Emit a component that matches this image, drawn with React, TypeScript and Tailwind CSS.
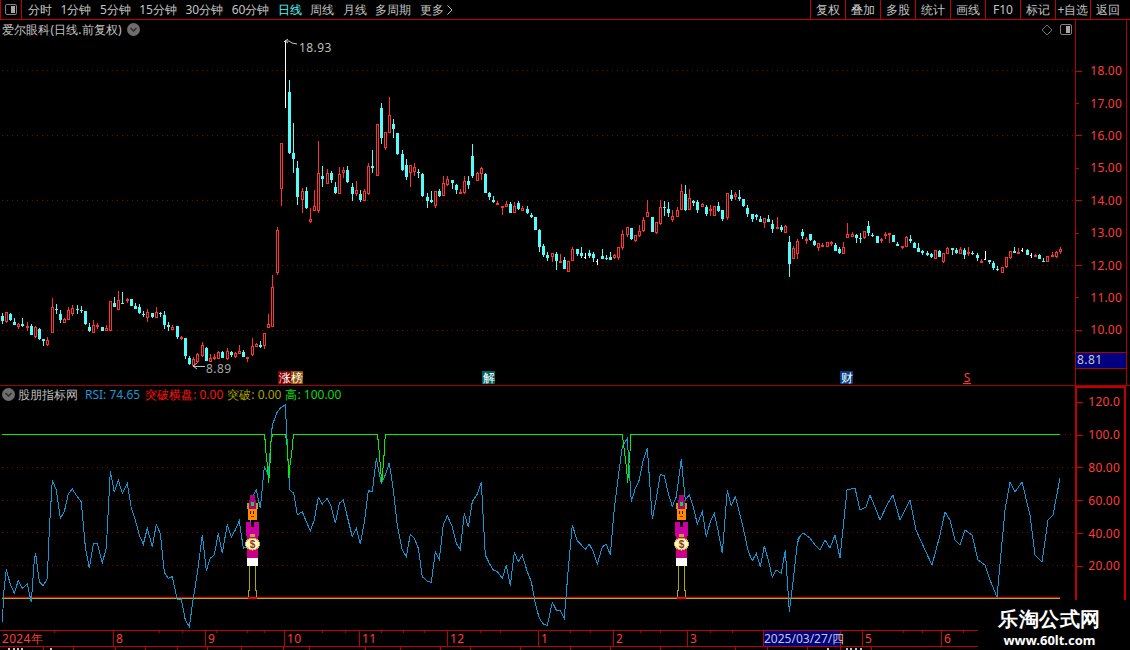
import React from "react";

const SEG: { x0: number; y0: number; d: string }[] = [
  { x0: 0, y0: 100, d: "c7,640,648,664,672 r19,635,637,667,670 c31,640,643,660,662 c43,655,665,675,675 r55,670,671,681,688 c67,655,672,679,682 r82,667,678,683,692 c94,672,678,705,705 r106,678,680,711,713 c118,685,687,717,719 c130,717,717,723,738 r142,712,721,735,738 r157,595,622,698,698 c169,612,627,631,642 c181,630,642,660,668 r193,655,656,668,668 r205,622,630,660,660 r217,616,624,641,648 c232,615,627,630,642 c244,618,630,632,640 c256,633,633,672,674 c268,670,681,692,695 r280,660,676,698,698 r292,670,675,681,686 c307,681,681,692,692 r319,675,683,692,692 r331,603,604,692,692 c343,590,610,620,622 r355,573,600,629,629 c367,576,608,610,610 r382,594,598,604,610 c394,597,597,617,619 c406,609,618,626,628 c418,613,622,638,641 c430,633,643,646,652 r442,628,637,653,666 c457,640,640,650,654 r469,622,637,653,653 c481,635,638,641,652 c493,633,645,675,687 c505,666,675,681,692 r517,675,681,690,690 c532,677,677,711,717 r544,708,711,717,719 c556,714,714,767,777 c568,768,773,792,796 r580,770,778,797,797 r592,758,763,786,788 r607,727,736,767,772 c619,741,744,783,784 r631,762,775,785,787 r643,762,770,778,781 r655,752,756,776,778 c667,753,756,774,774 r682,745,754,776,780 c694,752,756,765,770 r706,756,760,770,773 r718,736,754,761,761 c730,750,756,771,771 r742,771,771,772,786 r757,714,739,765,767 r769,728,733,742,742 c781,724,735,742,744 r793,699,700,738,746 r805,642,673,683,683 r817,526,562,680,680 r832,381,390,520,525 r844,130,130,268,318 w856,-180,-178,-176,24 c868,-60,-24,159,161 c880,69,159,177,219 c892,183,205,290,315 r907,265,273,300,338 c919,262,273,325,327 r931,324,358,366,369 r943,270,319,332,332 r955,124,220,332,338 c967,198,229,236,260 r982,208,220,251,251 c994,213,220,240,250 c1006,245,262,280,282 r1018,202,222,281,281 r1030,202,210,218,233 c1042,198,210,247,249" },
  { x0: 350, y0: 90, d: "c7,280,292,312,332 r19,274,301,312,317 c31,300,312,331,335 r43,298,304,332,332 r55,220,229,312,315 c67,180,228,234,249 r82,103,103,257,257 c94,40,54,144,162 r106,127,127,174,179 r118,22,76,128,128 c130,87,102,117,144 c142,129,129,192,195 c157,180,192,240,243 c169,207,225,261,270 r181,225,226,250,291 r193,220,232,246,258 c205,238,245,249,264 c217,250,252,319,321 c232,309,321,333,354 c244,303,330,337,339 r256,304,304,347,354 c268,297,304,318,321 r280,258,279,317,317 r292,258,267,285,288 c307,270,270,279,297 c319,282,286,300,312 r331,297,306,311,311 r343,258,274,309,312 c355,258,273,285,297 c367,162,198,258,264 r382,247,250,272,272 r394,232,234,251,270 c406,249,252,309,309 c418,306,309,321,330 c430,318,330,336,339 r442,333,339,345,346 r457,348,349,352,375 r469,333,343,350,351 c481,336,343,369,369 r493,336,348,369,369 c505,333,339,358,361 r517,349,354,362,362 c532,348,357,369,372 c544,369,375,382,385 c556,380,381,420,420 c568,417,420,470,486 c580,462,468,495,500 c592,486,495,504,513 r607,489,490,500,516 c619,486,492,513,540 r631,492,513,519,519 c643,501,510,537,537 r655,513,513,545,545 r667,471,477,513,513 c682,477,477,492,498 c694,471,489,498,504 w706,489,501,504,507 c718,480,489,498,504 c730,486,492,504,516 w742,507,513,516,525 c757,477,498,507,507 c769,495,504,507,510 c781,486,501,510,510 r793,492,495,504,507 r805,472,472,504,510 r817,420,432,474,480 r832,411,412,435,441 c844,414,414,447,450 r856,435,436,453,456 r868,405,423,438,441 r880,381,390,423,426 r892,330,366,381,381 c907,381,381,426,426 r919,396,397,429,432 r931,330,351,402,405 c943,333,351,354,378 c955,336,357,369,381 r967,360,378,390,396 r982,350,360,381,381 r994,282,303,360,360 c1006,285,312,360,363 r1018,297,324,360,360 c1030,330,333,339,348 c1042,330,336,360,369" },
  { x0: 700, y0: 170, d: "r7,98,102,111,111 c19,105,111,132,138 r31,105,117,123,138 r43,108,108,138,138 c55,96,108,123,126 c67,120,120,147,153 r82,69,69,144,150 c94,60,75,87,93 r106,66,72,81,90 c118,60,81,87,93 c130,87,87,108,111 c142,105,114,132,141 c157,132,132,147,156 c169,132,135,141,150 c181,138,147,156,156 r193,144,144,159,174 c205,135,147,156,156 c217,150,162,177,189 r232,141,172,174,174 c244,165,171,180,186 r256,165,168,189,189 c268,198,216,282,321 r280,228,234,267,267 r292,207,213,252,267 c307,177,186,198,207 r319,201,207,208,222 c331,192,192,210,213 c343,210,213,225,228 r355,220,220,234,243 r367,219,225,231,231 r382,216,217,231,231 r394,213,216,222,228 c406,219,225,243,243 c418,231,237,249,252 r430,216,231,251,251 r442,159,192,204,204 r457,186,192,201,201 c469,192,195,204,219 c481,189,204,207,219 r493,183,184,204,207 c505,153,168,189,198 c517,189,195,198,201 c532,198,198,219,219 r544,204,207,213,219 r556,186,192,199,207 r568,189,190,191,219 c580,195,195,216,216 c592,216,222,228,228 r607,228,228,230,237 r619,198,201,231,231 c631,195,207,213,219 c643,216,219,234,234 c655,219,234,246,246 c667,240,243,249,255 c682,243,249,255,258 c694,249,252,261,264 r706,240,240,267,267 c718,240,243,261,261 r730,249,249,276,279 r742,231,234,252,252 c757,234,234,240,255 c769,234,240,249,252 r781,231,237,252,252 c793,234,240,255,267 r805,231,246,252,258 c817,243,248,250,255 c832,249,255,264,273 r844,267,273,275,276 w856,243,267,270,270 c868,270,270,276,282 c880,273,279,294,300 c892,288,297,300,303 r907,291,291,309,309 r919,261,261,291,294 r931,243,243,264,267 c943,231,243,249,249 r955,234,246,252,252 w967,234,240,243,246 c982,237,240,255,255 w994,249,255,258,264 r1006,252,254,258,258 c1018,252,255,267,267 c1030,264,273,276,276 r1042,258,258,276,276 r1057,246,255,261,261 r1069,243,246,261,264 r1081,231,237,246,252" },
];

const RSI_A = "7,665 12,570 19,507 30,550 43,580 55,541 67,565 82,552 94,607 103,480 107,460 118,545 130,557 142,535 148,390 157,240 169,270 181,355 193,335 205,282 217,267 232,290 244,305 256,440 268,505 280,432 292,430 307,488 319,445 331,213 343,277 355,240 367,280 382,250 394,325 406,360 418,405 430,433 442,385 457,440 469,373 481,400 493,517 505,535 517,530 532,600 544,597 556,660 568,680 580,595 592,520 607,405 619,512 631,475 643,465 655,400 667,460 682,373 694,412 706,390 718,362 730,445 745,440 757,290 769,270 781,325 793,200 805,225 817,75 832,35 844,22 856,15 865,195 870,270 881,280 892,345 907,335 919,365 931,392 943,360 955,292 967,312 982,295 994,320 1006,370 1018,310 1030,300 1042,350 1057,410 1069,385 1081,433 1093,367 1105,272 1117,275 1129,175 1144,250 1156,225 1168,188 1180,270 1192,375 1200,417";
const RSI_B = "7,450 19,470 31,403 43,415 55,445 67,530 82,543 94,548 106,455 118,478 130,375 142,347 157,380 169,430 181,448 193,340 205,382 217,305 232,282 244,247 256,465 268,490 280,510 292,515 307,535 319,495 331,557 343,457 355,485 367,466 382,515 394,545 406,610 418,655 430,672 442,677 457,607 469,630 481,632 493,655 505,505 517,375 532,423 544,435 556,448 568,433 580,455 592,493 607,440 619,433 631,465 643,325 655,230 667,140 682,115 694,305 706,265 718,240 730,180 742,145 757,358 769,295 781,223 793,227 805,280 817,320 829,290 844,178 856,300 868,285 880,320 892,372 907,335 919,410 931,365 943,340 955,395 967,460 982,270 994,317 1006,290 1018,335 1030,385 1045,455 1057,482 1069,460 1081,500 1093,438 1105,480 1117,532 1129,510 1144,520 1156,450 1162,540 1168,635 1180,540 1192,430 1200,410";
const RSI_C = "797,540 803,533 810,538 815,545 820,550 825,540 830,548 835,535 840,558 847,490 855,488 860,510 866,507 870,495 875,507 880,520 887,505 893,495 900,520 905,510 910,500 916,530 925,550 932,565 940,535 945,512 950,520 955,540 960,545 965,530 972,535 978,560 985,565 990,580 997,597 1005,510 1010,482 1015,492 1022,482 1030,515 1035,555 1042,562 1048,520 1053,515 1060,478";

const map = (s: string, x0: number) =>
  s.split(" ").map((p) => {
    const [x, y] = p.split(",").map(Number);
    return `${(x0 + x / 3).toFixed(1)},${(400 + y / 3).toFixed(1)}`;
  }).join(" ");
const RSI = [map(RSI_A, 0), map(RSI_B, 400), RSI_C].join(" ");

const dip = (pts: number[][], x0: number) => pts.map(([x, y]) => `${(x0 + x / 3).toFixed(1)},${(400 + y / 3).toFixed(1)}`).join(" ");
const GREEN = [
  "2,434.5",
  dip([[793,103],[796,125],[798,158],[802,195],[806,250],[810,190],[813,125],[818,103],[856,103],[860,125],[863,160],[866,235],[870,195],[875,160],[878,125],[881,103],[1132,103],[1135,125],[1138,160],[1141,195],[1145,250],[1150,195],[1153,155],[1156,103]], 0),
  dip([[667,103],[670,125],[673,150],[676,175],[680,210],[683,250],[687,190],[690,155],[693,103]], 400),
  "1060,434.5",
].join(" ");

function Candles() {
  const out: React.ReactElement[] = [];
  SEG.forEach((s, si) => {
    s.d.split(" ").forEach((tok, i) => {
      const t = tok[0];
      const [xz, hi, top, bot, lo] = tok.slice(1).split(",").map(Number);
      const cx = Math.floor(s.x0 + xz / 3);
      const Y = (v: number) => Math.round(s.y0 + v / 3);
      const col = t === "c" ? "#54fcfc" : t === "r" ? "#ff3232" : "#ffffff";
      const yh = Y(hi), yt = Y(top), yb = Y(bot), yl = Y(lo);
      out.push(
        <g key={`${si}-${i}`}>
          {yt > yh && <rect x={cx} y={yh} width={1} height={yt - yh} fill={col} />}
          {yl > yb && <rect x={cx} y={yb} width={1} height={yl - yb} fill={col} />}
          {t === "r" ? (
            <rect x={cx - 0.5} y={yt + 0.5} width={2} height={Math.max(yb - yt - 1, 1)} fill="#000" stroke={col} strokeWidth={1} />
          ) : t === "c" ? (
            <rect x={cx - 1} y={yt} width={3} height={Math.max(yb - yt, 1)} fill={col} />
          ) : (
            <rect x={cx - 1} y={yt} width={2} height={1} fill={col} />
          )}
        </g>
      );
    });
  });
  return <g shapeRendering="crispEdges">{out}</g>;
}

function Figure({ x }: { x: number }) {
  return (
    <g shapeRendering="crispEdges">
      <polyline points={`${x - 3},566 ${x - 3},590 ${x - 4},590 ${x - 4},598 ${x - 5},598`} fill="none" stroke="#b0a800" />
      <polyline points={`${x + 3},566 ${x + 3},590 ${x + 4},590 ${x + 4},598 ${x + 5},598`} fill="none" stroke="#b0a800" />
      <rect x={x - 4} y={597} width={9} height={2} fill="#ff0000" />
      <rect x={x - 5} y={558} width={11} height={8} fill="#ffffff" />
      <rect x={x - 5} y={535} width={11} height={23} fill="#cc0088" />
      <rect x={x - 6} y={522} width={13} height={14} fill="#cc00a0" />
      <rect x={x - 1} y={517} width={3} height={10} fill="#000000" />
      <rect x={x - 4} y={508} width={9} height={12} fill="#ff8c00" />
      <rect x={x - 2} y={511} width={1} height={3} fill="#3a1a00" />
      <rect x={x + 1} y={511} width={1} height={3} fill="#3a1a00" />
      <rect x={x - 1} y={516} width={3} height={1} fill="#ff0000" />
      <rect x={x - 5} y={503} width={2} height={6} fill="#b8a020" />
      <rect x={x + 4} y={503} width={2} height={6} fill="#b8a020" />
      <rect x={x - 3} y={500} width={7} height={9} fill="#b00080" />
      <rect x={x - 2} y={495} width={5} height={6} fill="#b00080" />
      <rect x={x - 1} y={502} width={3} height={4} fill="#00e040" />
      <rect x={x - 2} y={534} width={5} height={3} fill="#c8a040" />
      <ellipse cx={x + 0.5} cy={544} rx={7} ry={6} fill="#fff6c0" stroke="#d8b030" />
      <text x={x + 0.5} y={548} textAnchor="middle" fontSize={10} fontWeight={700} fill="#8a3a20" fontFamily="Liberation Sans, sans-serif">$</text>
    </g>
  );
}

function Dotted({ y, x2 = 1075 }: { y: number; x2?: number }) {
  return <line x1={2} x2={x2} y1={y} y2={y} stroke="#8c0000" strokeDasharray="1 4" shapeRendering="crispEdges" />;
}

function Chevron() {
  return (
    <svg width="13" height="13" viewBox="0 0 13 13" className="shrink-0">
      <circle cx="6.5" cy="6.5" r="6.5" fill="#6e6e6e" />
      <polyline points="3.5,5 6.5,8 9.5,5" fill="none" stroke="#2c2c2c" strokeWidth="1.5" />
    </svg>
  );
}

function Toggle({ className = "" }: { className?: string }) {
  return (
    <svg width="12" height="11" viewBox="0 0 12 11" className={className}>
      <rect x="0.5" y="0.5" width="11" height="10" rx="1.5" fill="none" stroke="#808080" />
      <rect x="6" y="2" width="4" height="7" fill="#a8a8a8" />
    </svg>
  );
}

function AxisRow({ v, h, big }: { v: string; h: string; big?: boolean }) {
  return (
    <div className={`flex items-center ${h}`}>
      <div className={`h-px bg-[#d00000] ${big ? "w-[6px]" : "w-[3px]"}`} />
      <span className="ml-auto pr-[4px] text-[12px] tracking-[0.2px] text-[#ff3c3c]">{v}</span>
    </div>
  );
}

const NAV = ["分时", "1分钟", "5分钟", "15分钟", "30分钟", "60分钟", "日线", "周线", "月线", "多周期"];
const BTN = ["复权", "叠加", "多股", "统计", "画线", "F10", "标记", "+自选", "返回"];
const MONTHS: [string, string][] = [
  ["2024年", "w-[113px]"], ["8", "w-[92px]"], ["9", "w-[79px]"], ["10", "w-[75px]"], ["11", "w-[88px]"],
  ["12", "w-[91px]"], ["1", "w-[75px]"], ["2", "w-[74px]"], ["3", "w-[76px]"],
];
const TICKS = [54, 159, 182, 216, 247, 264, 322, 345, 381, 403, 424, 480, 500, 570, 590, 640, 660, 710, 732, 903, 922, 963];
const BOTTOM_TICKS = [43, 73, 115, 145, 177, 207, 241, 283, 309, 365, 400, 440, 470, 520, 570, 610, 660, 735, 767, 807, 840, 871];

export default function App() {
  return (
    <div className="relative flex h-[650px] w-[1130px] flex-col overflow-hidden bg-black font-['Liberation_Sans','Noto_Sans_CJK_SC',sans-serif] text-[12px] text-[#c4c4c4]">
      <header className="flex h-[20px] shrink-0 items-center border-b border-[#c00000]">
        <div className="flex h-full w-[22px] items-center justify-center border-x border-[#c00000]">
          <Toggle />
        </div>
        <nav className="ml-[6px] flex items-center gap-[8.5px]">
          {NAV.map((n) => (
            <span key={n} className={n === "日线" ? "text-[#54fcfc]" : ""}>{n}</span>
          ))}
          <span className="flex items-center gap-[3px]">
            更多
            <svg width="6" height="10" viewBox="0 0 6 10"><polyline points="0.5,0.5 5,5 0.5,9.5" fill="none" stroke="#c4c4c4" /></svg>
          </span>
        </nav>
        <div className="ml-auto flex h-full">
          {BTN.map((b) => (
            <span key={b} className="flex h-full w-[35px] items-center justify-center border-l border-[#c00000] text-[12px]">{b}</span>
          ))}
          <span className="w-[5px]" />
        </div>
      </header>

      <section className="flex h-[366px] shrink-0 border-b border-[#a00000]">
        <div className="relative w-[1075px] shrink-0">
          <svg className="absolute inset-0" width="1075" height="365" viewBox="0 20 1075 365">
            {[70.5, 135.5, 200.5, 265.5, 330.5].map((y) => <Dotted key={y} y={y} />)}
            <Candles />
            <polyline points="285,41 289,41 292,43 297,44" fill="none" stroke="#c8c8c8" />
            <polyline points="288,39 285,41 288,43" fill="none" stroke="#c8c8c8" />
            <polyline points="205,366 193,366" fill="none" stroke="#c0c0c0" shapeRendering="crispEdges" />
            <polyline points="197,363 193,366 197,369" fill="none" stroke="#c0c0c0" />
          </svg>
          <div className="relative flex h-[18px] items-center pl-[2px] pt-[1px]">
            <span className="tracking-[0.1px]">爱尔眼科(日线.前复权)</span>
            <span className="ml-[5px]"><Chevron /></span>
            <div className="ml-auto flex items-center gap-[7px] pr-[3px]">
              <svg width="12" height="12" viewBox="0 0 12 12"><polygon points="6,1 11,6 6,11 1,6" fill="none" stroke="#707070" /></svg>
              <Toggle />
            </div>
          </div>
          <span className="absolute left-[299px] top-[19px] text-[12px] tracking-[0.4px] text-[#bcbcbc]">18.93</span>
          <span className="absolute left-[206px] top-[340px] text-[12px] tracking-[0.4px] text-[#a8a8a8]">8.89</span>
          <div className="absolute left-[278px] top-[351px] flex h-[13px] text-[12px] leading-[13px] text-white">
            <span className="w-[13px] bg-[#800000] text-center">涨</span>
            <span className="w-[12px] bg-[#8a5000] text-center">榜</span>
          </div>
          <span className="absolute left-[482px] top-[351px] h-[13px] w-[13px] bg-[#006060] text-center text-[12px] leading-[13px] text-white">解</span>
          <span className="absolute left-[840px] top-[351px] h-[13px] w-[13px] bg-[#003c80] text-center text-[12px] leading-[13px] text-white">财</span>
          <span className="absolute left-[963px] top-[351px] h-[13px] w-[8px] border-b border-[#ff3232] text-center text-[12px] leading-[13px] text-[#ff3c3c]">S</span>
        </div>
        <aside className="relative flex w-[55px] flex-col border-l border-[#b00000]">
          <div className="flex h-full w-[51px] flex-col border-r border-[#b00000] pt-[35px]">
            {["18.00", "17.00", "16.00", "15.00", "14.00", "13.00", "12.00", "11.00", "10.00"].map((v, i) => (
              <AxisRow key={v} v={v} h="h-[32.4px] shrink-0" big={i % 2 === 0} />
            ))}
            <div className="mt-[5px] flex h-[17px] items-center border-y border-[#b00000] bg-[#000080] pl-[1px] text-[12px] tracking-[0.4px] text-[#c8c8c8]">8.81</div>
          </div>
        </aside>
      </section>

      <section className="flex h-[244px] shrink-0">
        <div className="relative w-[1075px] shrink-0">
          <svg className="absolute inset-0" width="1075" height="244" viewBox="0 386 1075 244">
            <g shapeRendering="crispEdges">
              {[467.5, 500.5, 532.5, 565.5].map((y) => <Dotted key={y} y={y} />)}
              <line x1={1060} x2={1075} y1={434.5} y2={434.5} stroke="#8c0000" strokeDasharray="1 4" />
              <line x1={2} x2={1060} y1={597.5} y2={597.5} stroke="#e00000" />
              <line x1={2} x2={1060} y1={598.5} y2={598.5} stroke="#b8b000" />
              <polyline points={RSI} fill="none" stroke="#1097d8" />
              <polyline points={GREEN} fill="none" stroke="#00f000" />
            </g>
            <Figure x={252} />
            <Figure x={681} />
          </svg>
          <div className="relative flex h-[17px] items-center pl-[2px]">
            <Chevron />
            <span className="ml-[3px] text-[#bdbdbd]">股朋指标网</span>
            <span className="ml-[7px] text-[#1e96d6]">RSI: 74.65</span>
            <span className="ml-[5px] text-[#ff1010]">突破横盘: 0.00</span>
            <span className="ml-[4px] text-[#a8a000]">突破: 0.00</span>
            <span className="ml-[4px] text-[#10d810]">高: 100.00</span>
          </div>
        </div>
        <aside className="flex w-[55px] flex-col">
          <div className="flex h-full w-[51px] flex-col border-x-2 border-t-2 border-[#c00000]">
            <div className="-mt-[2px] flex flex-col">
              {["120.0", "100.0", "80.00", "60.00", "40.00", "20.00"].map((v) => (
                <AxisRow key={v} v={v} h="h-[32.8px] shrink-0" big />
              ))}
            </div>
          </div>
        </aside>
      </section>

      <footer className="relative flex h-[17px] w-[978px] shrink-0 border-y border-[#c00000] text-[12px] leading-[15px] tracking-[0.3px] text-[#ff3c3c]">
        {MONTHS.map(([m, w], i) => (
          <span key={m} className={`${w} shrink-0 pl-[2px] ${i ? "border-l border-[#c00000]" : ""}`}>{m}</span>
        ))}
        <span className="w-[78px] shrink-0 whitespace-nowrap border-x border-[#c00000] bg-[#000080] text-center tracking-normal text-[#c8c8c8]">2025/03/27/四</span>
        <span className="w-[21px] shrink-0" />
        <span className="w-[79px] shrink-0 border-l border-[#c00000] pl-[2px]">5</span>
        <span className="w-[36px] shrink-0 border-l border-[#c00000] pl-[2px]">6</span>
        <svg className="absolute left-0 top-0" width="978" height="2">
          {TICKS.map((x) => <rect key={x} x={x} y={0} width={1} height={2} fill="#c00000" />)}
        </svg>
      </footer>

      <svg className="shrink-0" width="978" height="3">
        {BOTTOM_TICKS.map((x) => <rect key={x} x={x} y={0} width={1} height={3} fill="#c00000" />)}
        {[8, 13, 17, 21, 50, 827, 846, 850, 855, 860].map((x) => <rect key={x} x={x} y={1} width={2} height={2} fill="#c0c0c0" />)}
      </svg>

      <div className="absolute bottom-0 right-0 flex h-[50px] w-[152px] flex-col items-center bg-black pr-[9px] pt-[8px] font-['Noto_Sans_CJK_SC',sans-serif] text-white">
        <span className="text-[20px] font-bold leading-[22px] tracking-[0.5px]">乐淘公式网</span>
        <span className="mt-[3px] font-['Liberation_Serif',serif] text-[13px] font-bold leading-[14px]">www.60lt.com</span>
      </div>
    </div>
  );
}
